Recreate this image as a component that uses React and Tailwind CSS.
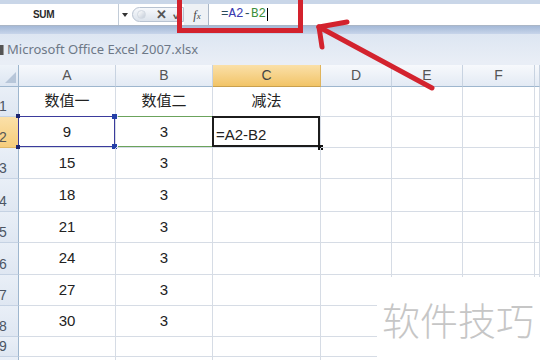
import React from "react";

const cols = [
  { l: "A", w: "w-[97px]" },
  { l: "B", w: "w-[97px]" },
  { l: "C", w: "w-[108px]" },
  { l: "D", w: "w-[71px]" },
  { l: "E", w: "w-[71px]" },
  { l: "F", w: "w-[72px]" },
  { l: "", w: "flex-1" },
];

const rows = [
  { n: 1, h: "h-[30px]", a: "数值一", b: "数值二", c: "减法" },
  { n: 2, h: "h-[31px]", a: "9", b: "3", sel: true },
  { n: 3, h: "h-[31px]", a: "15", b: "3" },
  { n: 4, h: "h-[33px]", a: "18", b: "3" },
  { n: 5, h: "h-[31px]", a: "21", b: "3" },
  { n: 6, h: "h-[32px]", a: "24", b: "3" },
  { n: 7, h: "h-[31px]", a: "27", b: "3" },
  { n: 8, h: "h-[31px]", a: "30", b: "3" },
  { n: 9, h: "h-[20px]" },
  { n: "", h: "h-[31px]" },
];

function Cell({ col, children, sel, idx }) {
  return (
    <div
      className={`${col.w} relative flex items-center justify-center border-r border-b border-[#d6dce5] text-[15px] text-[#222]`}
    >
      {children}
      {sel && idx === 0 && (
        <>
          <div className="absolute -top-px -left-px right-0 bottom-0 border border-[#3b3b9c]" />
          <div className="absolute -top-[3px] -left-[3px] w-[4px] h-[4px] bg-[#1d2570]" />
          <div className="absolute -bottom-[2px] -left-[3px] w-[4px] h-[4px] bg-[#1d2570]" />
          <div className="absolute -top-[3px] -right-[2px] w-[5px] h-[5px] bg-[#2440a8]" />
          <div className="absolute -bottom-[2px] -right-[2px] w-[5px] h-[5px] bg-[#2440a8]" />
        </>
      )}
      {sel && idx === 1 && (
        <div className="absolute -top-px left-[2px] right-0 bottom-0 border-t border-b border-[#6ba35c]" />
      )}
      {sel && idx === 2 && (
        <>
          <div className="absolute -top-[1px] -left-[1px] right-0 bottom-0 border-2 border-[#1c1c1c]" />
          <div className="absolute -bottom-[3px] -right-[3px] w-[5px] h-[5px] bg-[#111]" />
        </>
      )}
    </div>
  );
}

export default function App() {
  return (
    <div className="relative w-[540px] h-[360px] overflow-hidden bg-white font-['Liberation_Sans','Noto_Sans_CJK_SC',sans-serif]">
      {/* top band */}
      <div className="h-[4px] bg-[#c9d6e8]" />
      {/* formula bar */}
      <div className="flex h-[21px] items-center bg-white">
        <div className="w-[119px] h-full flex items-center pl-[33px] border-r border-[#c2ccd8]">
          <span className="text-[10px] font-bold text-[#2a2a2a] tracking-[-0.3px]">SUM</span>
        </div>
        <div className="w-[12px] flex items-center justify-center">
          <div className="w-0 h-0 border-l-[3px] border-r-[3px] border-t-[4px] border-l-transparent border-r-transparent border-t-[#333]" />
        </div>
        <div className="w-[52px] h-[15px] ml-[1px] rounded-l-full border border-[#b7c2d1] bg-gradient-to-b from-[#f7f9fc] to-[#dce3ec] flex items-center gap-[9px] pl-[4px]">
          <div className="w-[9px] h-[9px] rounded-full bg-gradient-to-br from-[#ffffff] to-[#c3ccd8] border border-[#d2d9e2]" />
          <span className="text-[13px] leading-none font-bold text-[#555] ml-[1px]">✕</span>
          <span className="text-[12px] leading-none font-bold text-[#555] -ml-[3px]">✓</span>
        </div>
        <div className="w-[24px] h-full bg-[#eef1f5] flex items-center justify-center pl-[2px]">
          <span className="font-['Liberation_Serif',serif] italic text-[12px] text-[#444]">
            f<span className="text-[9px]">x</span>
          </span>
        </div>
        <div className="flex-1 h-full flex items-center pl-[12px] border-l border-[#a9b6c7] font-['Liberation_Mono',monospace] text-[12.5px]">
          <span className="text-[#2b4b5b]">=</span>
          <span className="text-[#3a3ab0]">A2</span>
          <span className="text-[#2b4b5b]">-</span>
          <span className="text-[#3c8f3c]">B2</span>
          <span className="w-px h-[13px] bg-black ml-[1px]" />
        </div>
      </div>
      <div className="h-[1px] bg-[#aab6c6]" />
      <div className="h-[8px] bg-gradient-to-b from-[#a4b9d7] to-[#c7d5ea]" />
      {/* title bar */}
      <div className="h-[28px] flex items-end pb-[4px] bg-gradient-to-b from-[#dde6f2] to-[#e9eef6]">
        <div className="w-[4px] h-[10px] mb-[3px] bg-[#555] border-r border-[#999]" />
        <span className="ml-[3px] text-[13px] text-[#6d7887] font-['Noto_Sans',sans-serif] leading-[18px]">
          Microsoft Office Excel 2007.xlsx
        </span>
      </div>
      <div className="h-[3px] bg-[#e9eef6]" />

      {/* column header row */}
      <div className="flex h-[22px]">
        <div className="w-[19px] relative border-r border-b border-[#9eb6ce] bg-gradient-to-b from-[#eef3f9] to-[#dde6f2]">
          <div className="absolute right-[2px] bottom-[3px] w-0 h-0 border-l-[11px] border-b-[11px] border-l-transparent border-b-[#b7c6d9]" />
        </div>
        {cols.map((c, i) => (
          <div
            key={i}
            className={`${c.w} flex items-center justify-center border-r border-b text-[14px] ${
              c.l === "C"
                ? "bg-gradient-to-b from-[#fae0a8] to-[#f2c466] border-r-[#e0b45c] border-b-[#c9a04e] text-[#444]"
                : "bg-gradient-to-b from-[#f7f9fc] to-[#e3eaf4] border-r-[#c8d3e1] border-b-[#9eb6ce] text-[#555]"
            }`}
          >
            {c.l}
          </div>
        ))}
      </div>

      {rows.map((r, ri) => (
        <div key={ri} className={`flex ${r.h}`}>
          <div
            className={`w-[19px] overflow-hidden flex items-end pb-[3px] border-r border-b text-[14px] leading-none ${
              r.sel
                ? "bg-gradient-to-b from-[#fbe0a8] to-[#f6cd7c] border-r-[#d8ab55] border-b-[#e0b868] text-[#555]"
                : "bg-gradient-to-b from-[#e9eff7] to-[#dfe7f2] border-r-[#9eb6ce] border-b-[#c5d2e3] text-[#4b5563]"
            }`}
          >
            <span className="-ml-[1px]">{r.n}</span>
          </div>
          <Cell col={cols[0]} sel={r.sel} idx={0}>
            {r.a}
          </Cell>
          <Cell col={cols[1]} sel={r.sel} idx={1}>
            {r.b}
          </Cell>
          <Cell col={cols[2]} sel={r.sel} idx={2}>
            {r.sel ? (
              <span className="self-end mr-auto pl-[3px] pb-[1px]">=A2-B2</span>
            ) : (
              r.c
            )}
          </Cell>
          <Cell col={cols[3]} />
          <Cell col={cols[4]} />
          <Cell col={cols[5]} />
          <Cell col={cols[6]} />
        </div>
      ))}

      {/* red highlight box */}
      <div className="absolute left-[177px] -top-[10px] w-[126px] h-[43px] border-[5px] border-[#d3222d]" />

      {/* red arrow */}
      <svg className="absolute left-0 top-0 pointer-events-none" width="540" height="360">
        <g stroke="#d3232e" strokeWidth="5" strokeLinecap="round" fill="none">
          <line x1="319" y1="27" x2="432" y2="88" />
          <line x1="319" y1="27" x2="347" y2="22" />
          <line x1="319" y1="27" x2="322" y2="47" />
        </g>
      </svg>

      {/* watermark */}
      <div className="absolute left-[377px] top-[277px] right-0 bottom-0 bg-white pl-[5px] pt-[23px]">
        <span className="block text-[38px] leading-none text-[#c6c6c6] font-['Noto_Sans_CJK_SC',sans-serif] font-light">
          软件技巧
        </span>
      </div>
    </div>
  );
}
